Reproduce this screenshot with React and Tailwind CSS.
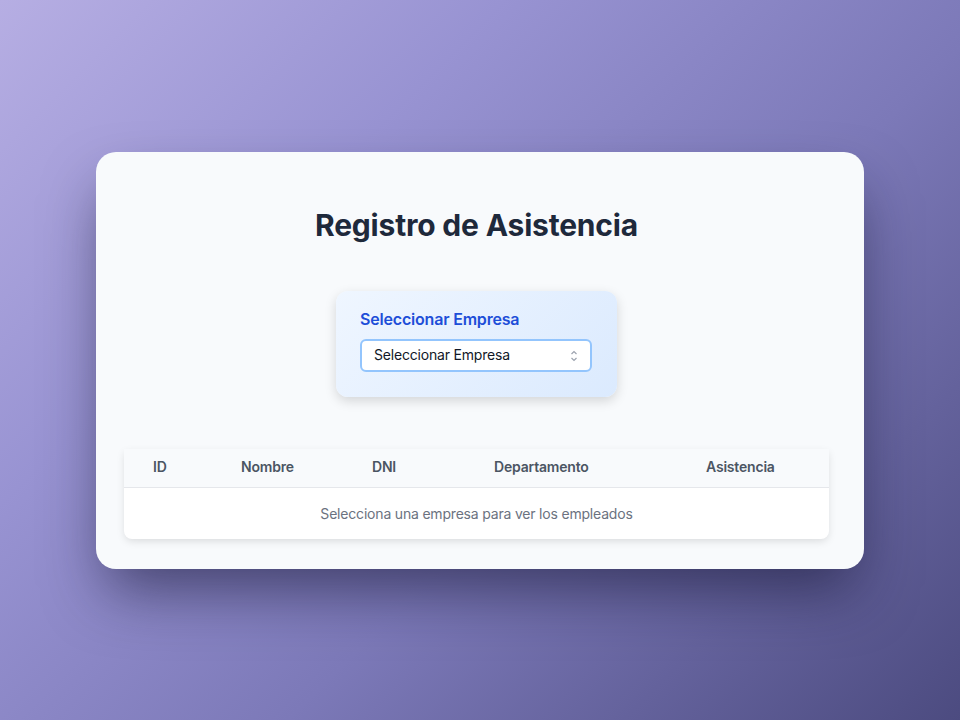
import { useState } from "react";

const COLUMNS = [
  { key: "id", label: "ID", width: "w-[88px]" },
  { key: "nombre", label: "Nombre", width: "w-[131px]" },
  { key: "dni", label: "DNI", width: "w-[122px]" },
  { key: "depto", label: "Departamento", width: "w-[212px]" },
  { key: "asistencia", label: "Asistencia", width: "" },
];

const App = () => {
  const [empresa, setEmpresa] = useState("");

  return (
    <div
      className="w-[960px] h-[720px] flex items-center justify-center tracking-[-0.012em] bg-[linear-gradient(135deg,#b6aee3_0%,#9893d2_30%,#7c79b8_60%,#4c4b80_100%)]"
      style={{ fontFamily: "Inter, 'Noto Sans', sans-serif" }}
    >
      <div className="w-[768px] h-[417px] rounded-[20px] bg-[#f8fafc] pt-[55px] pl-7 pr-[35px] flex flex-col items-center shadow-[0_30px_60px_-10px_rgba(20,20,50,0.6)]">
        {/* titulo */}
        <h1 className="text-[30px] leading-9 font-bold text-[#1e293b]">
          Registro de Asistencia
        </h1>

        {/* selector de empresa */}
        <div className="mt-12 w-[281px] h-[106px] rounded-xl bg-[linear-gradient(135deg,#eff6ff,#dbeafe)] px-6 pt-4 shadow-[0_4px_12px_rgba(0,0,0,0.15)]">
          <label className="block text-base font-semibold text-[#1d4ed8] leading-6">
            Seleccionar Empresa
          </label>
          <div className="relative mt-2">
            <select
              value={empresa}
              onChange={(e) => setEmpresa(e.target.value)}
              className="appearance-none w-[232px] h-[33px] rounded-md border-2 border-[#93c5fd] bg-white pl-3 pr-8 text-sm text-[#111827] outline-none"
            >
              <option value="">Seleccionar Empresa</option>
            </select>
            <svg
              className="absolute right-[15px] top-[11px] pointer-events-none"
              width="8"
              height="12"
              viewBox="0 0 8 12"
              fill="none"
              stroke="#9ca3af"
              strokeWidth="1.2"
            >
              <path d="M1.5 4 L4 1.5 L6.5 4" />
              <path d="M1.5 8 L4 10.5 L6.5 8" />
            </svg>
          </div>
        </div>

        {/* tabla de empleados */}
        <div className="mt-[52px] w-full rounded-b-lg bg-white shadow-[0_3px_8px_-1px_rgba(0,0,0,0.13)] overflow-hidden">
          <table className="w-full table-fixed text-sm">
            <thead className="bg-[#f8fafc]">
              <tr className="h-[39px] border-b border-[#e5e7eb]">
                {COLUMNS.map((col) => (
                  <th
                    key={col.key}
                    className={`${col.width} pl-[29px] pb-[2px] text-left font-semibold text-[#4b5563]`}
                  >
                    {col.label}
                  </th>
                ))}
              </tr>
            </thead>
            <tbody>
              <tr className="h-[51px]">
                <td colSpan={5} className="pt-[2px] text-center text-[#6b7280]">
                  Selecciona una empresa para ver los empleados
                </td>
              </tr>
            </tbody>
          </table>
        </div>
      </div>
    </div>
  );
};

export default App;
